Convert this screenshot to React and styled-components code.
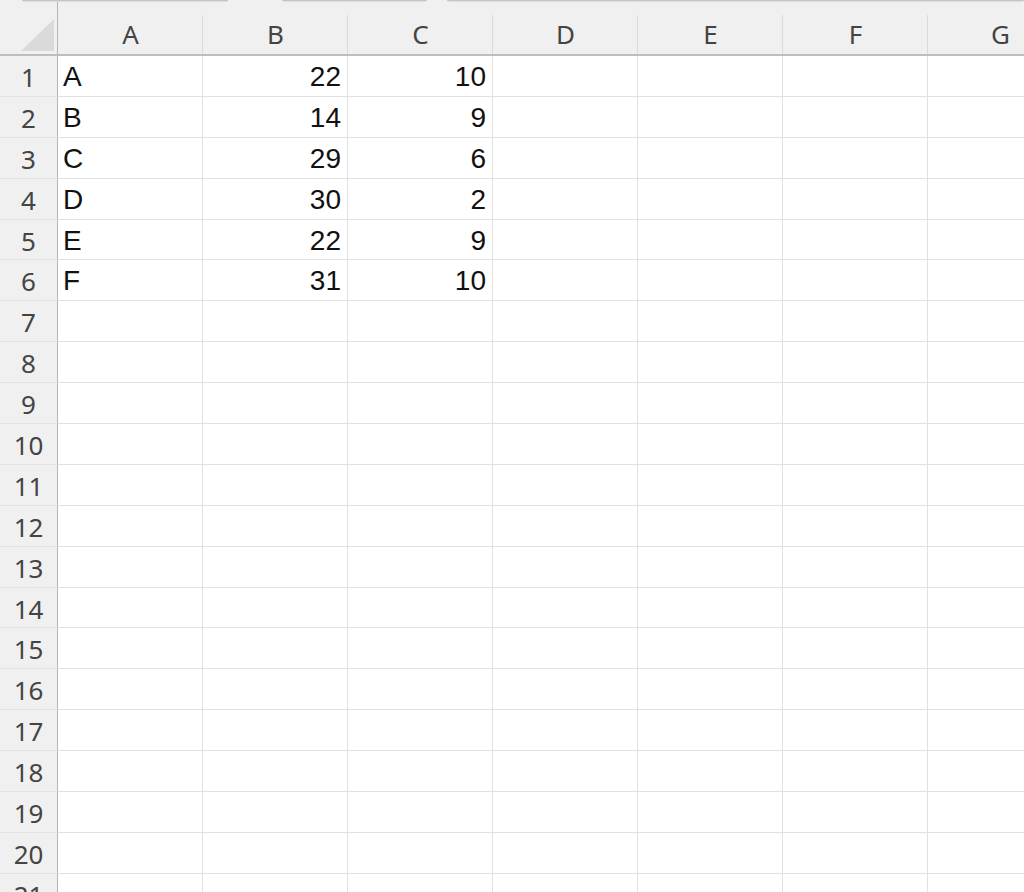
import React from 'react'
import styled, { createGlobalStyle } from 'styled-components'

const GlobalStyle = createGlobalStyle`
  html, body {
    margin: 0;
    padding: 0;
    background: #ffffff;
    overflow: hidden;
  }
  * {
    box-sizing: border-box;
  }
`

// Sizes
const ROW_HEAD = 58
const COL_W = 145
const ROW_H = 40.9
const COLUMNS = ['A', 'B', 'C', 'D', 'E', 'F', 'G']
const ROW_COUNT = 21

const data = [
  ['A', 22, 10],
  ['B', 14, 9],
  ['C', 29, 6],
  ['D', 30, 2],
  ['E', 22, 9],
  ['F', 31, 10],
]

/* PAGE */
const Page = styled.div`
  width: 1024px;
  height: 892px;
  overflow: hidden;
  display: flex;
  flex-direction: column;
  background: #f0f0f0;
`

/* the edge of the ribbon bars showing above the sheet */
const TopStrip = styled.div`
  height: 2px;
  display: flex;
  background: #f0f0f0;
`

const StripGap = styled.div`
  flex: 0 0 ${(p) => p.w}px;
`

const StripBar = styled.div`
  flex: ${(p) => (p.w ? `0 0 ${p.w}px` : '1 1 auto')};
  height: 2px;
  border-top: 1px solid #c4c4c4;
  background: #dedede;
  border-radius: 0 0 2px 2px;
`

/* GRID */
const Sheet = styled.div`
  display: grid;
  grid-template-columns: ${ROW_HEAD}px repeat(${COLUMNS.length}, ${COL_W}px);
  grid-template-rows: 54px repeat(${ROW_COUNT}, ${ROW_H}px);
  background: #ffffff;
`

const Corner = styled.div`
  display: flex;
  align-items: flex-end;
  justify-content: flex-end;
  padding: 0 3px 3px 0;
  background: #f0f0f0;
  border-right: 1px solid #b4b4b4;
  border-bottom: 2px solid #bdbdbd;
`

const CornerMark = styled.div`
  width: 33px;
  height: 32px;
  background: #dadada;
  clip-path: polygon(100% 0, 100% 100%, 0 100%);
`

const ColHead = styled.div`
  position: relative;
  display: flex;
  align-items: center;
  justify-content: center;
  padding-top: 11px;
  background: #f0f0f0;
  border-bottom: 2px solid #bdbdbd;
  font-family: 'Noto Sans', 'Open Sans', sans-serif;
  font-size: 26px;
  color: #444444;

  &::after {
    content: '';
    position: absolute;
    top: 13px;
    right: 0;
    bottom: 0;
    width: 1px;
    background: #dadada;
  }
`

const RowHead = styled.div`
  display: flex;
  align-items: center;
  justify-content: center;
  padding-top: 2px;
  background: #f0f0f0;
  border-right: 1px solid #b4b4b4;
  border-bottom: 1px solid #e2e2e2;
  font-family: 'Noto Sans', 'Open Sans', sans-serif;
  font-size: 26px;
  color: #444444;
`

const Cell = styled.div`
  display: flex;
  align-items: center;
  justify-content: ${(p) => (p.numeric ? 'flex-end' : 'flex-start')};
  padding: 2px 6px 0 5px;
  border-right: 1px solid #e1e1e1;
  border-bottom: 1px solid #e1e1e1;
  font-family: 'Liberation Sans', Arial, sans-serif;
  font-size: 28px;
  color: #111111;
  white-space: nowrap;
  overflow: hidden;
`

export default function App() {
  const rows = Array.from({ length: ROW_COUNT }, (_, i) => i + 1)

  return (
    <>
      <GlobalStyle />
      <Page>
        <TopStrip>
          <StripGap w={22} />
          <StripBar w={206} />
          <StripGap w={54} />
          <StripBar w={145} />
          <StripGap w={20} />
          <StripBar />
        </TopStrip>
        <Sheet>
          <Corner>
            <CornerMark />
          </Corner>
          {COLUMNS.map((col) => (
            <ColHead key={col}>{col}</ColHead>
          ))}
          {rows.map((r) => {
            const row = data[r - 1] || []
            return (
              <React.Fragment key={r}>
                <RowHead>{r}</RowHead>
                {COLUMNS.map((col, c) => {
                  const value = row[c]
                  return (
                    <Cell key={col} numeric={typeof value === 'number'}>
                      {value}
                    </Cell>
                  )
                })}
              </React.Fragment>
            )
          })}
        </Sheet>
      </Page>
    </>
  )
}
